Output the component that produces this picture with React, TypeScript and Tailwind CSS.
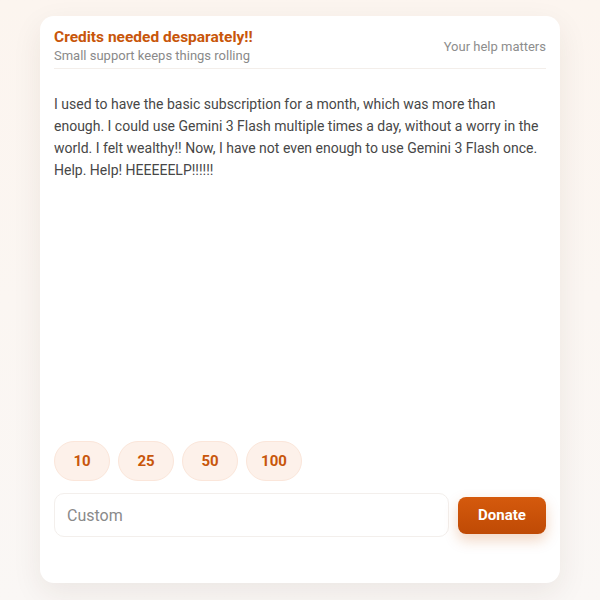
const AMOUNTS = [10, 25, 50, 100]

const App = () => {
  return (
    <div
      className="min-h-[600px] w-full bg-gradient-to-b from-[#fcf5ef] to-[#faf7f5] px-10 pt-4"
      style={{ fontFamily: 'Roboto, "Liberation Sans", sans-serif' }}
    >
      <div className="flex h-[567px] flex-col rounded-[14px] bg-white px-[14px] pt-3 shadow-[0_10px_30px_rgba(60,40,20,0.08)]">
        <div className="flex items-center justify-between border-b border-[#f3eeea] pb-[3px]">
          <div>
            <p className="text-[15.5px] font-bold leading-[19px] text-[#c8560a]">
              Credits needed desparately!!
            </p>
            <p className="text-[13px] leading-[18px] text-[#8a8a8a]">Small support keeps things rolling</p>
          </div>
          <p className="text-[13px] text-[#8d8d8d]">Your help matters</p>
        </div>

        <p className="mt-[24px] text-[14px] leading-[22px] text-[#474747]">
          I used to have the basic subscription for a month, which was more than enough. I could use
          Gemini 3 Flash multiple times a day, without a worry in the world. I felt wealthy!! Now, I
          have not even enough to use Gemini 3 Flash once. Help. Help! HEEEEELP!!!!!!
        </p>

        <div className="flex-1" />

        <div className="flex gap-2">
          {AMOUNTS.map((a) => (
            <button
              key={a}
              className="h-10 w-14 rounded-full border border-[#fbe6da] bg-[#fdf1ea] text-[15px] font-bold text-[#c8560a]"
            >
              {a}
            </button>
          ))}
        </div>

        <div className="mt-3 mb-[46px] flex items-center gap-[9px]">
          <input
            placeholder="Custom"
            className="h-11 flex-1 rounded-[10px] border border-[#f3efec] bg-white px-3 text-[16px] text-[#333] outline-none placeholder:text-[#8a8a8a]"
          />
          <button className="h-[37px] w-[88px] rounded-[8px] bg-gradient-to-b from-[#d55a0d] to-[#bf4a05] text-[15px] font-bold text-white shadow-[0_6px_14px_rgba(200,86,10,0.25)]">
            Donate
          </button>
        </div>
      </div>
    </div>
  )
}

export default App
